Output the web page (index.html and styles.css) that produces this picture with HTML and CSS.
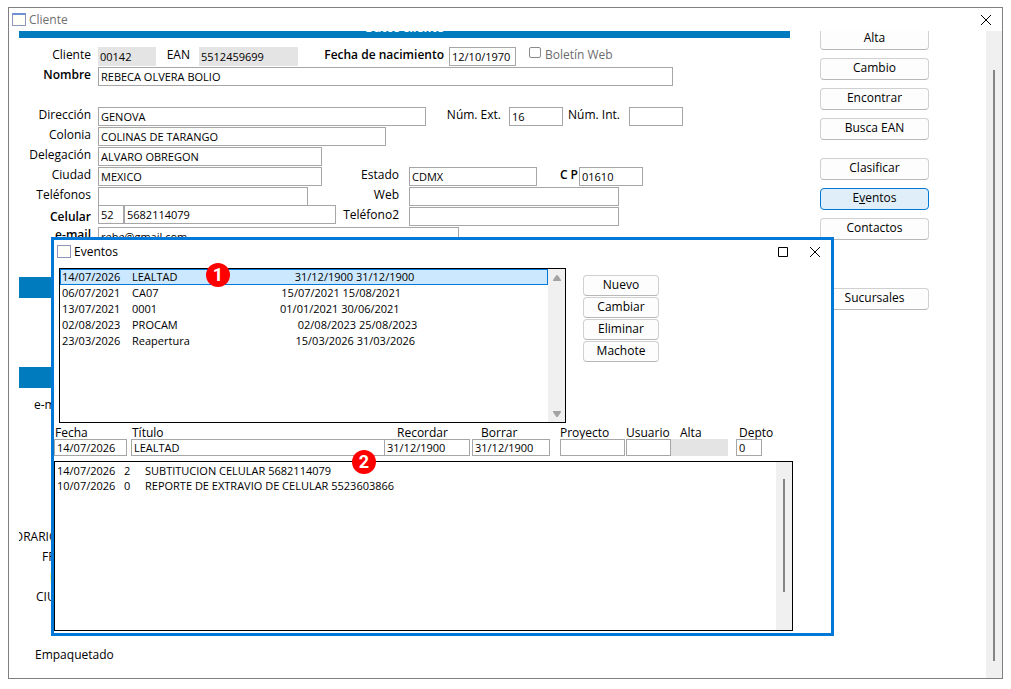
FILE: index.html
```
<!DOCTYPE html>
<html lang="es">
<head>
<meta charset="UTF-8">
<meta name="viewport" content="width=device-width, initial-scale=1.0">
<title>Cliente</title>
<link rel="stylesheet" href="styles.css">
</head>
<body>

<div class="window">
  <div class="titlebar">
    <span class="app-icon"></span>
    <h1>Cliente</h1>
    <button type="button" class="win-btn" aria-label="Cerrar">
      <svg width="12" height="12" viewBox="0 0 12 12"><path d="M1 1L11 11M11 1L1 11" stroke="#000" fill="none"/></svg>
    </button>
  </div>

  <div class="client">
    <form class="form">
      <h2 class="bar">Datos cliente</h2>
      <div class="rows">
        <div class="row">
          <label class="first" for="cliente">Cliente</label>
          <input class="w-code" type="text" id="cliente" value="00142" disabled>
          <label class="l-ean" for="ean">EAN</label>
          <input class="w-ean" type="text" id="ean" value="5512459699" disabled>
          <label class="l-fecha bold" for="nacimiento">Fecha de nacimiento</label>
          <input class="w-fecha" type="text" id="nacimiento" value="12/10/1970">
          <input type="checkbox" id="boletin">
          <label class="muted" for="boletin">Boletín Web</label>
        </div>
        <div class="row">
          <label class="first bold" for="nombre">Nombre</label>
          <input class="w-nombre" type="text" id="nombre" value="REBECA OLVERA BOLIO">
        </div>
        <div class="row"></div>
        <div class="row">
          <label class="first" for="direccion">Dirección</label>
          <input class="w-dir" type="text" id="direccion" value="GENOVA">
          <label class="l-num" for="numext">Núm. Ext.</label>
          <input class="w-num" type="text" id="numext" value="16">
          <label class="l-int" for="numint">Núm. Int.</label>
          <input class="w-num" type="text" id="numint">
        </div>
        <div class="row">
          <label class="first" for="colonia">Colonia</label>
          <input class="w-col" type="text" id="colonia" value="COLINAS DE TARANGO">
        </div>
        <div class="row">
          <label class="first" for="delegacion">Delegación</label>
          <input class="w-del" type="text" id="delegacion" value="ALVARO OBREGON">
        </div>
        <div class="row">
          <label class="first" for="ciudad">Ciudad</label>
          <div class="main"><input class="w-del" type="text" id="ciudad" value="MEXICO"></div>
          <label class="side" for="estado">Estado</label>
          <input class="w-estado" type="text" id="estado" value="CDMX">
          <label class="l-cp bold" for="cp">C P</label>
          <input class="w-cp" type="text" id="cp" value="01610">
        </div>
        <div class="row">
          <label class="first" for="telefonos">Teléfonos</label>
          <div class="main"><input class="w-tel" type="text" id="telefonos"></div>
          <label class="side" for="web">Web</label>
          <input class="w-tel" type="text" id="web">
        </div>
        <div class="row">
          <label class="first low bold" for="celular">Celular</label>
          <div class="main phone">
            <input class="w-lada" type="text" aria-label="Lada" value="52">
            <input class="w-cel" type="text" id="celular" value="5682114079">
          </div>
          <label class="side" for="telefono2">Teléfono2</label>
          <input class="w-tel" type="text" id="telefono2">
        </div>
        <div class="row">
          <label class="first bold" for="email">e-mail</label>
          <input class="w-mail" type="text" id="email" value="rebe@gmail.com">
        </div>
      </div>
      <div class="bar bar-2"></div>
      <div class="bar bar-3"></div>
      <div class="extra">
        <span class="x-mail">e-mail</span>
        <span class="x-horario">HORARIO</span>
        <span class="x-fr">FRECUENCIA</span>
        <span class="x-mark"></span>
        <span class="x-ciudad">CIUDAD</span>
        <span class="x-emp">Empaquetado</span>
      </div>
    </form>

    <div class="actions">
      <button type="button">Alta</button>
      <button type="button">Cambio</button>
      <button type="button">Encontrar</button>
      <button type="button">Busca EAN</button>
      <button type="button" class="spaced">Clasificar</button>
      <button type="button" class="active">E<u>v</u>entos</button>
      <button type="button">Contactos</button>
      <button type="button" class="far">Sucursales</button>
    </div>

    <div class="scroll"><span class="thumb"></span></div>
  </div>

  <div class="dialog" role="dialog" aria-labelledby="dlgTitle">
    <div class="titlebar">
      <span class="app-icon"></span>
      <h2 id="dlgTitle">Eventos</h2>
      <button type="button" class="win-btn" aria-label="Maximizar">
        <svg width="12" height="12" viewBox="0 0 12 12"><path d="M1.5 1.5H10.5V10.5H1.5Z" stroke="#000" fill="none"/></svg>
      </button>
      <button type="button" class="win-btn" aria-label="Cerrar">
        <svg width="12" height="12" viewBox="0 0 12 12"><path d="M1 1L11 11M11 1L1 11" stroke="#000" fill="none"/></svg>
      </button>
    </div>

    <div class="top">
      <div class="listbox">
        <ul role="listbox" aria-label="Eventos">
          <li role="option" aria-selected="true"><span>14/07/2026</span>LEALTAD                                         31/12/1900 31/12/1900</li>
          <li role="option"><span>06/07/2021</span>CA07                                           15/07/2021 15/08/2021</li>
          <li role="option"><span>13/07/2021</span>0001                                           01/01/2021 30/06/2021</li>
          <li role="option"><span>02/08/2023</span>PROCAM                                          02/08/2023 25/08/2023</li>
          <li role="option"><span>23/03/2026</span>Reapertura                                     15/03/2026 31/03/2026</li>
        </ul>
        <div class="arrows">
          <svg width="10" height="8" viewBox="0 0 10 8"><path d="M4 1.5Q5 .5 6 1.5L9 6Q9.500 7 8.500 7H1.500Q.5 7 1 6Z" fill="#a3a3a3"/></svg>
          <svg width="10" height="8" viewBox="0 0 10 8"><path d="M4 6.500Q5 7.500 6 6.500L9 2Q9.500 1 8.500 1H1.500Q.5 1 1 2Z" fill="#a3a3a3"/></svg>
        </div>
      </div>
      <div class="edit">
        <button type="button">Nuevo</button>
        <button type="button">Cambiar</button>
        <button type="button">Eliminar</button>
        <button type="button">Machote</button>
      </div>
    </div>

    <div class="fields">
      <div class="field f-fecha"><label for="fecha">Fecha</label><input type="text" id="fecha" value="14/07/2026"></div>
      <div class="field f-titulo"><label for="titulo">Título</label><input type="text" id="titulo" value="LEALTAD"></div>
      <div class="field f-recordar"><label for="recordar">Recordar</label><input type="text" id="recordar" value="31/12/1900"></div>
      <div class="field f-borrar"><label for="borrar">Borrar</label><input type="text" id="borrar" value="31/12/1900"></div>
      <div class="field f-proyecto"><label for="proyecto">Proyecto</label><input type="text" id="proyecto"></div>
      <div class="field f-usuario"><label for="usuario">Usuario</label><input type="text" id="usuario"></div>
      <div class="field f-alta"><label for="alta">Alta</label><input type="text" id="alta" disabled></div>
      <div class="field f-depto"><label for="depto">Depto</label><input type="text" id="depto" value="0"></div>
    </div>

    <div class="memo">
      <table>
        <tr><td class="c-date">14/07/2026</td><td class="c-num">2</td><td>SUBTITUCION CELULAR 5682114079</td></tr>
        <tr><td class="c-date">10/07/2026</td><td class="c-num">0</td><td>REPORTE DE EXTRAVIO DE CELULAR 5523603866</td></tr>
      </table>
      <div class="memo-scroll"><span class="thumb"></span></div>
    </div>

    <span class="badge badge-1">1</span>
    <span class="badge badge-2">2</span>
  </div>
</div>

</body>
</html>
```
FILE: styles.css
```
* {
  box-sizing: border-box;
}
body {
  margin: 0;
  padding: 7px 8px 10px 8px;
  height: 100vh;
  background-color: #fff;
  color: #000;
  font-family: 'Open Sans', 'Noto Sans', sans-serif;
  font-size: 12px;
  line-height: 16px;
}
h1,
h2 {
  margin: 0;
  font-size: 12px;
  font-weight: normal;
}
button,
input {
  font-family: inherit;
  font-size: 12px;
  line-height: 16px;
  color: #000;
}
.window {
  position: relative;
  display: flex;
  flex-direction: column;
  height: 100%;
  border: 1px solid #808080;
}
.titlebar {
  display: flex;
  align-items: center;
  height: 23px;
  padding: 0 5px 0 3px;
}
.titlebar h1,
.titlebar h2 {
  flex: 1;
}
.titlebar h1 {
  color: #707070;
}
.app-icon {
  width: 14px;
  height: 13px;
  margin-right: 3px;
  background-color: #fffff8;
  border: 1px solid #8f94bd;
  border-top: 2px solid #6f8fd8;
}
.dialog .app-icon {
  border-top: 1px solid #8f94bd;
}
.win-btn {
  display: flex;
  width: 12px;
  margin: 0 5px 0 15px;
  padding: 0;
  background: none;
  border: none;
}

/* client area, scrolled down a little */
.client {
  flex: 1;
  display: flex;
  min-height: 0;
  overflow: hidden;
}
.form {
  flex: 1;
  min-width: 0;
  margin: -14px 30px 0 10px;
}
.bar {
  height: 21px;
  background-color: #007bbd;
  color: #fff;
  font-weight: bold;
  line-height: 21px;
  text-align: center;
}
.bar-2 {
  margin-top: 30px;
}
.bar-3 {
  margin-top: 69px;
}
.rows {
  margin-top: 9px;
}
.row {
  display: flex;
  align-items: flex-start;
  height: 20px;
}
.row label {
  flex-shrink: 0;
  white-space: nowrap;
}
.row label.first {
  width: 72px;
  margin-right: 7px;
  text-align: right;
}
.row label.low {
  padding-top: 2px;
}
.bold {
  font-weight: 600;
}
input[type="text"] {
  flex-shrink: 0;
  height: 19px;
  margin: 0;
  padding: 0 2px;
  border: 1px solid #a6a6a6;
  border-radius: 0;
  background-color: #fff;
  font-size: 11px;
}
input[type="text"]:disabled {
  border-color: #e4e4e4;
  background-color: #e4e4e4;
  padding-left: 1px;
}
input[type="checkbox"] {
  width: 12px;
  height: 11px;
  margin: 0 4px 0 13px;
  appearance: none;
  border: 1px solid #8a8a8a;
  border-radius: 2px;
}
.muted {
  color: #6d6d6d;
}
.main {
  width: 238px;
}
.phone {
  display: flex;
  margin-top: -2px;
}
.side {
  width: 63px;
  margin-right: 10px;
  text-align: right;
}
.l-ean {
  width: 34px;
  margin-right: 9px;
  text-align: right;
}
.l-fecha {
  width: 146px;
  margin-right: 5px;
  text-align: right;
}
.l-num {
  width: 75px;
  margin-right: 8px;
  text-align: right;
}
.l-int {
  width: 57px;
  margin-right: 9px;
  text-align: right;
}
.l-cp {
  width: 41px;
  margin-right: 1px;
  text-align: right;
}
.w-code { width: 58px; }
.w-ean { width: 99px; }
.w-fecha { width: 67px; }
.w-nombre { width: 575px; }
.w-dir { width: 328px; }
.w-num { width: 54px; }
.w-col { width: 288px; }
.w-del { width: 224px; }
.w-estado { width: 128px; }
.w-cp { width: 64px; }
.w-tel { width: 210px; }
.w-lada { width: 26px; }
.w-cel { width: 212px; }
.w-mail { width: 361px; }

.extra {
  display: flex;
  flex-direction: column;
  overflow: hidden;
  line-height: 20px;
}
.x-mail {
  margin: 7px 0 112px 15px;
}
.x-horario {
  margin-left: -14px;
}
.x-fr {
  margin-left: 23px;
}
.x-mark {
  width: 60px;
  height: 9px;
  margin: 6px 0 5px 31px;
  background-color: #ffff99;
}
.x-ciudad {
  margin-left: 17px;
}
.x-emp {
  margin: 38px 0 0 16px;
}

.actions {
  display: flex;
  flex-direction: column;
  gap: 8px;
  width: 109px;
  margin: -3px 57px 0 0;
}
.actions button,
.edit button {
  height: 22px;
  padding: 0 0 3px;
  background-color: #fdfdfd;
  border: 1px solid #d0d0d0;
  border-bottom-color: #b8b8b8;
  border-radius: 4px;
}
.actions .spaced {
  margin-top: 10px;
}
.actions .far {
  margin-top: 40px;
}
.actions .active {
  background-color: #e0eef9;
  border-color: #0078d4;
}
.scroll,
.memo-scroll {
  display: flex;
  flex-shrink: 0;
  width: 16px;
  background-color: #f0f0f0;
}
.scroll {
  padding: 39px 0 17px 7px;
}
.thumb {
  width: 2px;
  background-color: #858585;
}

/* events dialog */
.dialog {
  position: absolute;
  left: 42px;
  top: 229px;
  width: 783px;
  background-color: #fff;
  border: 3px solid #0078d7;
  padding-bottom: 2px;
}
.top {
  display: flex;
  margin: 5px 0 0 5px;
}
.listbox {
  display: flex;
  width: 507px;
  height: 155px;
  border: 1px solid #000;
}
.listbox ul {
  flex: 1;
  margin: 0;
  padding: 0;
  list-style: none;
  font-size: 11px;
}
.listbox li {
  height: 16px;
  padding-left: 2px;
  white-space: pre;
}
.listbox li[aria-selected="true"] {
  background-color: #cce8ff;
  box-shadow: inset 0 0 0 1px #0078d7;
}
.listbox li span {
  display: inline-block;
  width: 70px;
}
.arrows {
  display: flex;
  flex-direction: column;
  justify-content: space-between;
  align-items: center;
  width: 17px;
  padding: 5px 0 4px;
  background-color: #f0f0f0;
}
.edit {
  display: flex;
  flex-direction: column;
  gap: 1px;
  width: 76px;
  margin: 7px 0 0 17px;
}
.edit button {
  height: 21px;
  padding-bottom: 1px;
}
.fields {
  display: flex;
  margin-top: 2px;
}
.field {
  display: flex;
  flex-direction: column;
}
.field label {
  height: 14px;
  padding-left: 1px;
  white-space: nowrap;
}
.field input[type="text"] {
  width: 100%;
  height: 17px;
}
.f-fecha { width: 73px; }
.f-titulo { width: 254px; margin-left: 4px; }
.f-recordar { width: 86px; margin-left: -1px; }
.f-borrar { width: 78px; margin-left: 2px; }
.f-proyecto { width: 65px; margin-left: 10px; }
.f-usuario { width: 45px; margin-left: 1px; }
.f-alta { width: 57px; }
.f-depto { width: 26px; margin-left: 8px; }
.f-recordar label { padding-left: 13px; }
.f-borrar label,
.f-alta label { padding-left: 9px; }
.f-depto label { padding-left: 3px; }
.f-proyecto label,
.f-usuario label { padding-left: 0; }

.memo {
  display: flex;
  justify-content: space-between;
  align-items: flex-start;
  width: 739px;
  height: 170px;
  margin-top: 5px;
  border: 1px solid #000;
}
.memo table {
  margin-top: 1px;
  border-collapse: collapse;
  font-size: 11px;
  line-height: 15px;
}
.memo td {
  padding: 0;
}
.memo .c-date {
  width: 69px;
  padding-left: 2px;
}
.memo .c-num {
  width: 21px;
}
.memo-scroll {
  align-self: stretch;
  padding: 17px 0 38px 7px;
}
.badge {
  position: absolute;
  width: 24px;
  height: 24px;
  border-radius: 50%;
  background-color: #f00;
  color: #fff;
  font-family: Roboto, sans-serif;
  font-size: 18px;
  font-weight: bold;
  line-height: 24px;
  text-align: center;
}
.badge-1 {
  left: 152px;
  top: 23px;
}
.badge-2 {
  left: 298px;
  top: 210px;
}
```
